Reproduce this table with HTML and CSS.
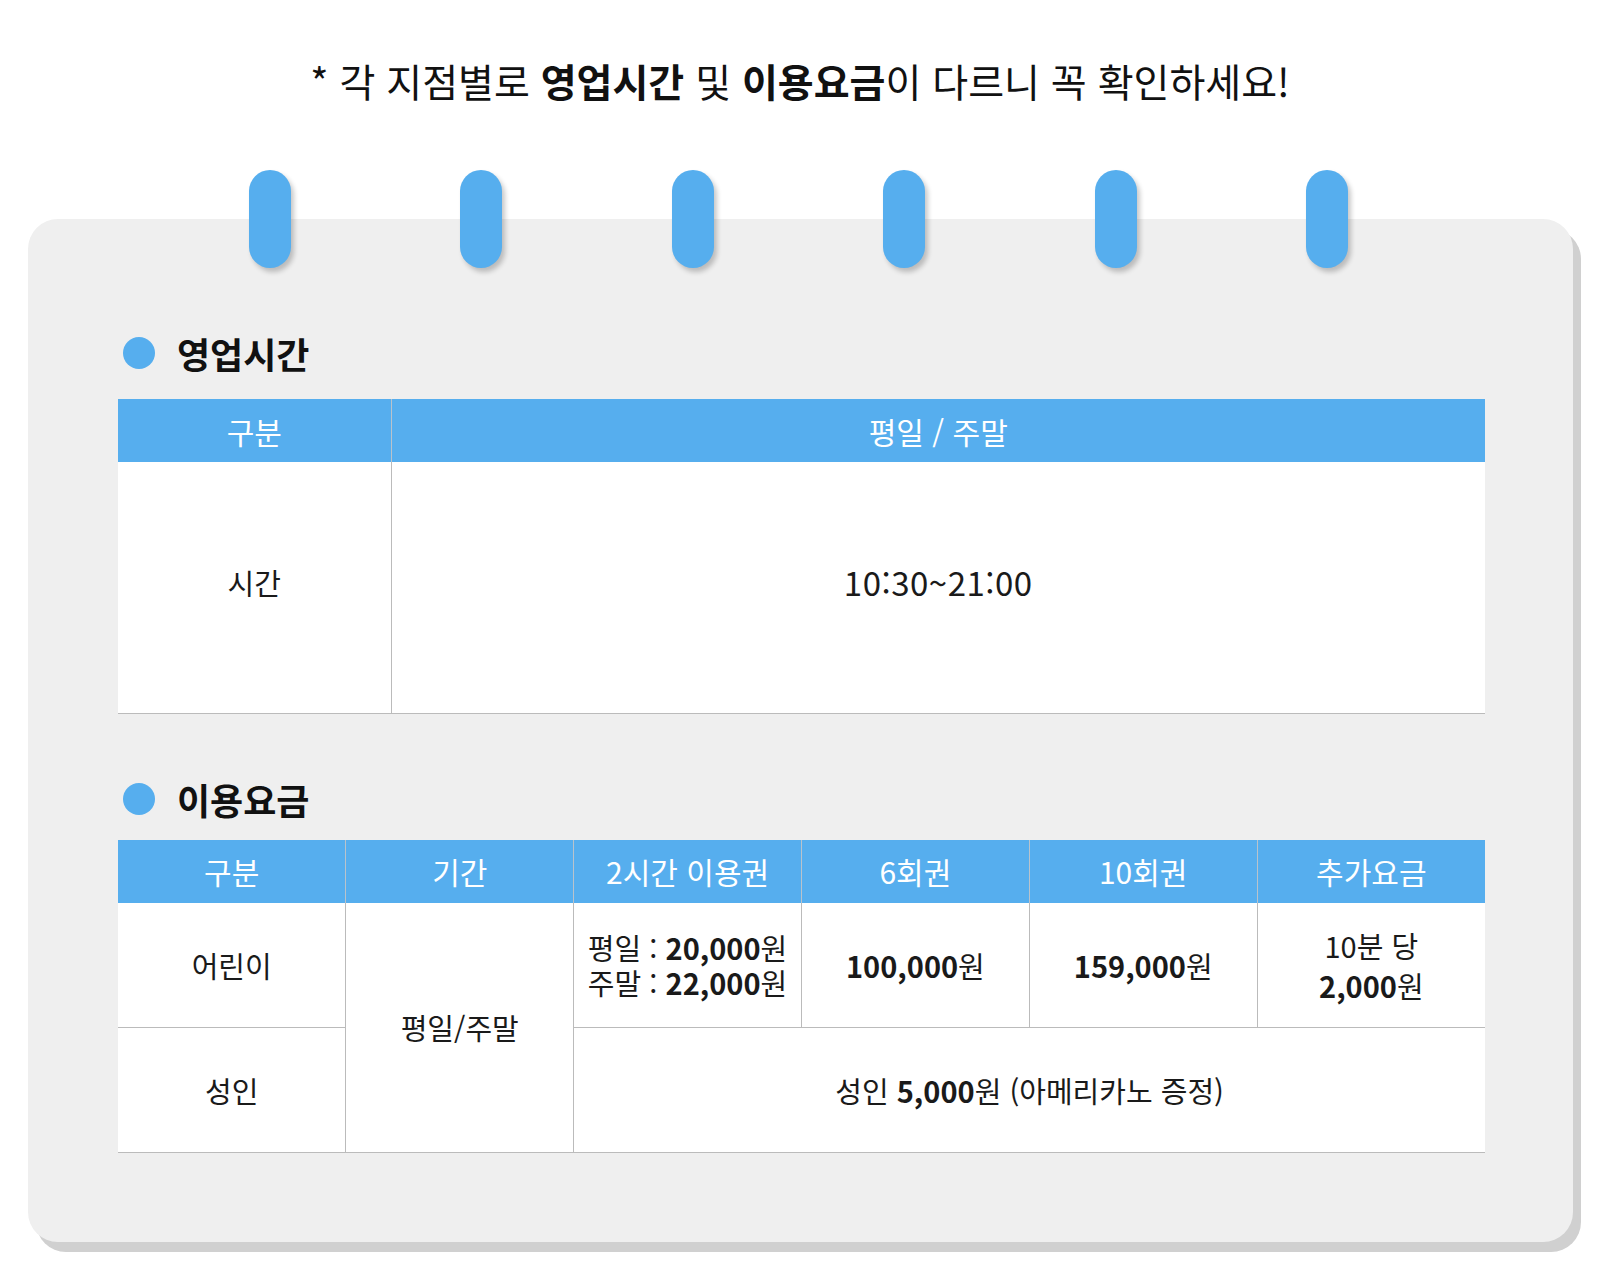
FILE: index.html
```html
<!DOCTYPE html>
<html lang="ko">
  <head>
    <meta charset="UTF-8" />
    <meta name="viewport" content="width=device-width, initial-scale=1.0" />
    <title>영업시간 및 이용요금</title>
    <link rel="stylesheet" href="styles.css">
  </head>
  <body>
    <div class="page">
      <p class="notice">* 각 지점별로 <b>영업시간</b> 및 <b>이용요금</b>이 다르니 꼭 확인하세요!</p>

      <div class="card">
        <div class="rings">
          <span class="ring"></span>
          <span class="ring"></span>
          <span class="ring"></span>
          <span class="ring"></span>
          <span class="ring"></span>
          <span class="ring"></span>
        </div>

        <h2 class="sec-title"><span class="dot"></span>영업시간</h2>
        <table class="tbl tbl-hours">
          <colgroup>
            <col class="c-first">
            <col>
          </colgroup>
          <tr>
            <th>구분</th>
            <th>평일 / 주말</th>
          </tr>
          <tr>
            <td class="tall">시간</td>
            <td class="tall time">10:30~21:00</td>
          </tr>
        </table>

        <h2 class="sec-title sec-two"><span class="dot"></span>이용요금</h2>
        <table class="tbl tbl-price">
          <tr>
            <th>구분</th>
            <th>기간</th>
            <th>2시간 이용권</th>
            <th>6회권</th>
            <th>10회권</th>
            <th>추가요금</th>
          </tr>
          <tr>
            <td>어린이</td>
            <td rowspan="2">평일/주말</td>
            <td class="tight">평일 : <b>20,000</b>원<br>주말 : <b>22,000</b>원</td>
            <td><b>100,000</b>원</td>
            <td><b>159,000</b>원</td>
            <td class="loose">10분 당<br><b>2,000</b>원</td>
          </tr>
          <tr>
            <td>성인</td>
            <td colspan="4">성인 <b>5,000</b>원 (아메리카노 증정)</td>
          </tr>
        </table>
      </div>
    </div>
  </body>
</html>
```

FILE: styles.css
```css
*{
    margin: 0;
    padding: 0;
    box-sizing: border-box;
}

body{
    background: #fff;
    color: #1a1a1a;
    font-family: "Noto Sans CJK KR", "Noto Sans", sans-serif;
}

.page{
    padding-top: 54px;
    padding-bottom: 30px;
}

.notice{
    text-align: center;
    font-size: 39px;
    line-height: 52px;
    font-weight: 400;
    color: #111;
}
.notice b{
    font-weight: 700;
}

.card{
    position: relative;
    margin: 113px 0 0 28px;
    width: 1545px;
    height: 1023px;
    padding: 114px 88px 0 90px;
    background: #efefef;
    border-radius: 30px;
    box-shadow: 8px 10px 0 #d0d0d0;
}

/* binder rings sitting over the card top */
.rings{
    position: absolute;
    top: -49px;
    left: -4px;
    right: 0;
    display: flex;
    justify-content: center;
    gap: 169.5px;
}
.ring{
    display: block;
    width: 42px;
    height: 98px;
    border-radius: 21px;
    background: #56aeee;
    box-shadow: 3px 4px 5px rgba(0, 0, 0, 0.22);
}

.sec-title{
    display: flex;
    align-items: center;
    height: 40px;
    margin-bottom: 26px;
    font-size: 36px;
    font-weight: 700;
    color: #111;
}
.sec-two{
    margin-top: 65px;
    margin-bottom: 21px;
}
.dot{
    width: 32px;
    height: 32px;
    margin: 0 22px 0 5px;
    border-radius: 50%;
    background: #56aeee;
}

.tbl{
    width: 100%;
    border-collapse: collapse;
    table-layout: fixed;
    background: #fff;
    font-size: 29px;
}
.tbl th{
    height: 63px;
    background: #56aeee;
    color: #fff;
    font-size: 30px;
    font-weight: 400;
    border-left: 1px solid #b9c3cc;
}
.tbl td{
    text-align: center;
    vertical-align: middle;
    border-left: 1px solid #bbb;
    border-bottom: 1px solid #bbb;
    color: #1a1a1a;
}
.tbl th:first-child,
.tbl tr > td:first-child{
    border-left: none;
}
.tbl td b{
    font-weight: 700;
}

.c-first{
    width: 273px;
}
.tbl-hours td.tall{
    height: 251px;
    padding-bottom: 10px;
}
.tbl-hours td.time{
    font-size: 33px;
    letter-spacing: 0.5px;
}

.tbl-price td{
    height: 125px;
}
.tbl-price td[rowspan]{
    border-left: 1px solid #bbb;
    border-right: 1px solid #bbb;
}
.tight{
    line-height: 35px;
}
.loose{
    line-height: 40px;
}
```
